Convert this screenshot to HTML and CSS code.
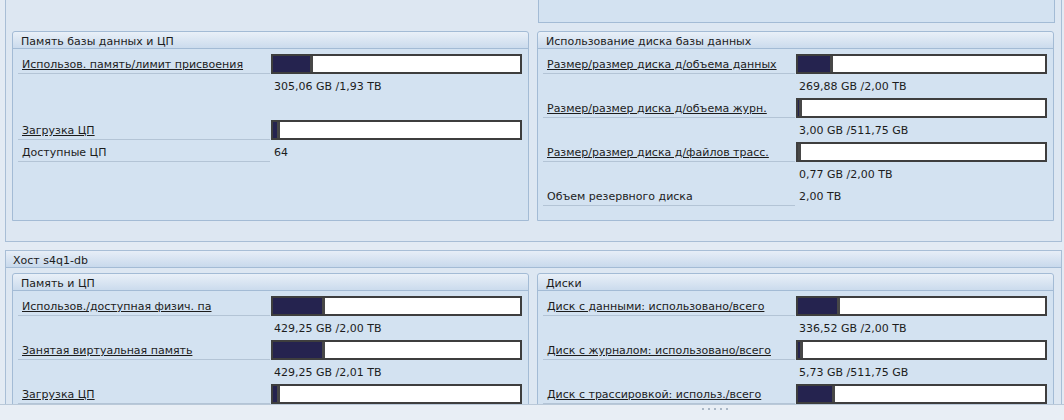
FILE: index.html
```html
<!DOCTYPE html>
<html lang="ru">
<head>
    <meta charset="UTF-8">
    <title>Обзор базы данных</title>
    <link rel="stylesheet" href="styles.css">
</head>
<body>
    <div class="screen">
        <!-- Верхняя панель: база данных -->
        <div class="panel">
            <div class="top-row">
                <div class="stub"></div>
            </div>
            <div class="groups">
                <section class="group short">
                    <div class="group-head">Память базы данных и ЦП</div>
                    <div class="row">
                        <a class="label link" href="#">Использов. память/лимит присвоения</a>
                        <div class="bar"><div class="fill" style="width:37px"></div></div>
                    </div>
                    <div class="row">
                        <span class="label blank"></span>
                        <span class="value">305,06 GB /1,93 TB</span>
                    </div>
                    <div class="row"></div>
                    <div class="row">
                        <a class="label link" href="#">Загрузка ЦП</a>
                        <div class="bar"><div class="fill" style="width:4px"></div></div>
                    </div>
                    <div class="row">
                        <span class="label">Доступные ЦП</span>
                        <span class="value">64</span>
                    </div>
                </section>
                <section class="group short">
                    <div class="group-head">Использование диска базы данных</div>
                    <div class="row">
                        <a class="label link" href="#">Размер/размер диска д/объема данных</a>
                        <div class="bar"><div class="fill" style="width:32px"></div></div>
                    </div>
                    <div class="row">
                        <span class="label blank"></span>
                        <span class="value">269,88 GB /2,00 TB</span>
                    </div>
                    <div class="row">
                        <a class="label link" href="#">Размер/размер диска д/объема журн.</a>
                        <div class="bar"><div class="fill" style="width:1px"></div></div>
                    </div>
                    <div class="row">
                        <span class="label blank"></span>
                        <span class="value">3,00 GB /511,75 GB</span>
                    </div>
                    <div class="row">
                        <a class="label link" href="#">Размер/размер диска д/файлов трасс.</a>
                        <div class="bar"><div class="fill" style="width:0px"></div></div>
                    </div>
                    <div class="row">
                        <span class="label blank"></span>
                        <span class="value">0,77 GB /2,00 TB</span>
                    </div>
                    <div class="row">
                        <span class="label">Объем резервного диска</span>
                        <span class="value">2,00 TB</span>
                    </div>
                </section>
            </div>
        </div>

        <!-- Хост -->
        <div class="panel host">
            <div class="host-head">Хост s4q1-db</div>
            <div class="groups">
                <section class="group">
                    <div class="group-head">Память и ЦП</div>
                    <div class="row">
                        <a class="label link" href="#">Использов./доступная физич. па</a>
                        <div class="bar"><div class="fill" style="width:49px"></div></div>
                    </div>
                    <div class="row">
                        <span class="label blank"></span>
                        <span class="value">429,25 GB /2,00 TB</span>
                    </div>
                    <div class="row">
                        <a class="label link" href="#">Занятая виртуальная память</a>
                        <div class="bar"><div class="fill" style="width:49px"></div></div>
                    </div>
                    <div class="row">
                        <span class="label blank"></span>
                        <span class="value">429,25 GB /2,01 TB</span>
                    </div>
                    <div class="row">
                        <a class="label link" href="#">Загрузка ЦП</a>
                        <div class="bar"><div class="fill" style="width:4px"></div></div>
                    </div>
                </section>
                <section class="group">
                    <div class="group-head">Диски</div>
                    <div class="row">
                        <a class="label link" href="#">Диск с данными: использовано/всего</a>
                        <div class="bar"><div class="fill" style="width:39px"></div></div>
                    </div>
                    <div class="row">
                        <span class="label blank"></span>
                        <span class="value">336,52 GB /2,00 TB</span>
                    </div>
                    <div class="row">
                        <a class="label link" href="#">Диск с журналом: использовано/всего</a>
                        <div class="bar"><div class="fill" style="width:2px"></div></div>
                    </div>
                    <div class="row">
                        <span class="label blank"></span>
                        <span class="value">5,73 GB /511,75 GB</span>
                    </div>
                    <div class="row">
                        <a class="label link" href="#">Диск с трассировкой: использ./всего</a>
                        <div class="bar"><div class="fill" style="width:34px"></div></div>
                    </div>
                </section>
            </div>
        </div>
    </div>

    <!-- Нижняя полоса с захватом -->
    <div class="statusbar">
        <span class="grip"></span>
    </div>
</body>
</html>
```

FILE: styles.css
```css
body {
    margin: 0;
    background-color: #e3ebf4;
    font-family: "DejaVu Sans", Tahoma, sans-serif;
    font-size: 11px;
    color: #1c1c1c;
}

.screen {
    height: 404px;
    overflow: hidden;
}

/* Внешняя рамка с группами */
.panel {
    margin-left: 5px;
    width: 1043px;
    padding: 0 6px 20px 6px;
    background-color: #dde7f2;
    border: 1px solid #a8bed6;
    border-top: none;
}

.top-row {
    display: flex;
    justify-content: flex-end;
    margin-bottom: 8px;
}

.stub {
    width: 515px;
    height: 22px;
    background-color: #d3e2f1;
    border: 1px solid #a3bbd5;
    border-top: none;
}

.groups {
    display: flex;
    gap: 8px;
}

.group {
    width: 515px;
    height: 340px;
    background-color: #d3e2f1;
    border: 1px solid #a3bbd5;
    border-radius: 3px 3px 0 0;
}

.group.short {
    height: 188px;
}

.group-head {
    height: 16px;
    line-height: 19px;
    padding-left: 8px;
    margin-bottom: 4px;
    overflow: hidden;
    background: linear-gradient(#e9f0f8, #cbdbed);
    border-bottom: 1px solid #a3bbd5;
    border-radius: 3px 3px 0 0;
}

/* Строка: подпись + индикатор или значение */
.row {
    display: grid;
    grid-template-columns: 252px 251px;
    column-gap: 1px;
    height: 22px;
    margin-left: 5px;
}

.label {
    height: 18px;
    padding-top: 2px;
    line-height: 19px;
    padding-left: 4px;
    border-bottom: 1px solid #b3c4d6;
    white-space: nowrap;
    color: #1c1c1c;
}

.label.blank {
    border-bottom: none;
}

.link {
    text-decoration: underline;
}

.value {
    line-height: 24px;
    padding-left: 3px;
    white-space: nowrap;
}

.bar {
    margin-top: 1px;
    height: 16px;
    border: 2px solid #3e3e3e;
    background-color: #ffffff;
}

.fill {
    height: 16px;
    background-color: #25234f;
    border-right: 3px solid #474747;
}

/* Хост */
.host {
    margin-top: 8px;
    padding-top: 5px;
    padding-bottom: 0;
    border-top: 1px solid #a8bed6;
}

.host-head {
    height: 16px;
    line-height: 19px;
    margin: -5px -6px 5px -6px;
    padding-left: 7px;
    overflow: hidden;
    background: linear-gradient(#e7eef7, #c8d9ec);
    border-bottom: 1px solid #a3bbd5;
}

.statusbar {
    height: 15px;
    border-top: 1px solid #b9c8d8;
    background-color: #e8eef5;
    display: flex;
    justify-content: center;
    padding-left: 364px;
}

.grip {
    width: 28px;
    height: 2px;
    margin-top: 3px;
    background-image: radial-gradient(circle, #a9b7c6 1px, transparent 1.2px);
    background-size: 6px 2px;
}
```
